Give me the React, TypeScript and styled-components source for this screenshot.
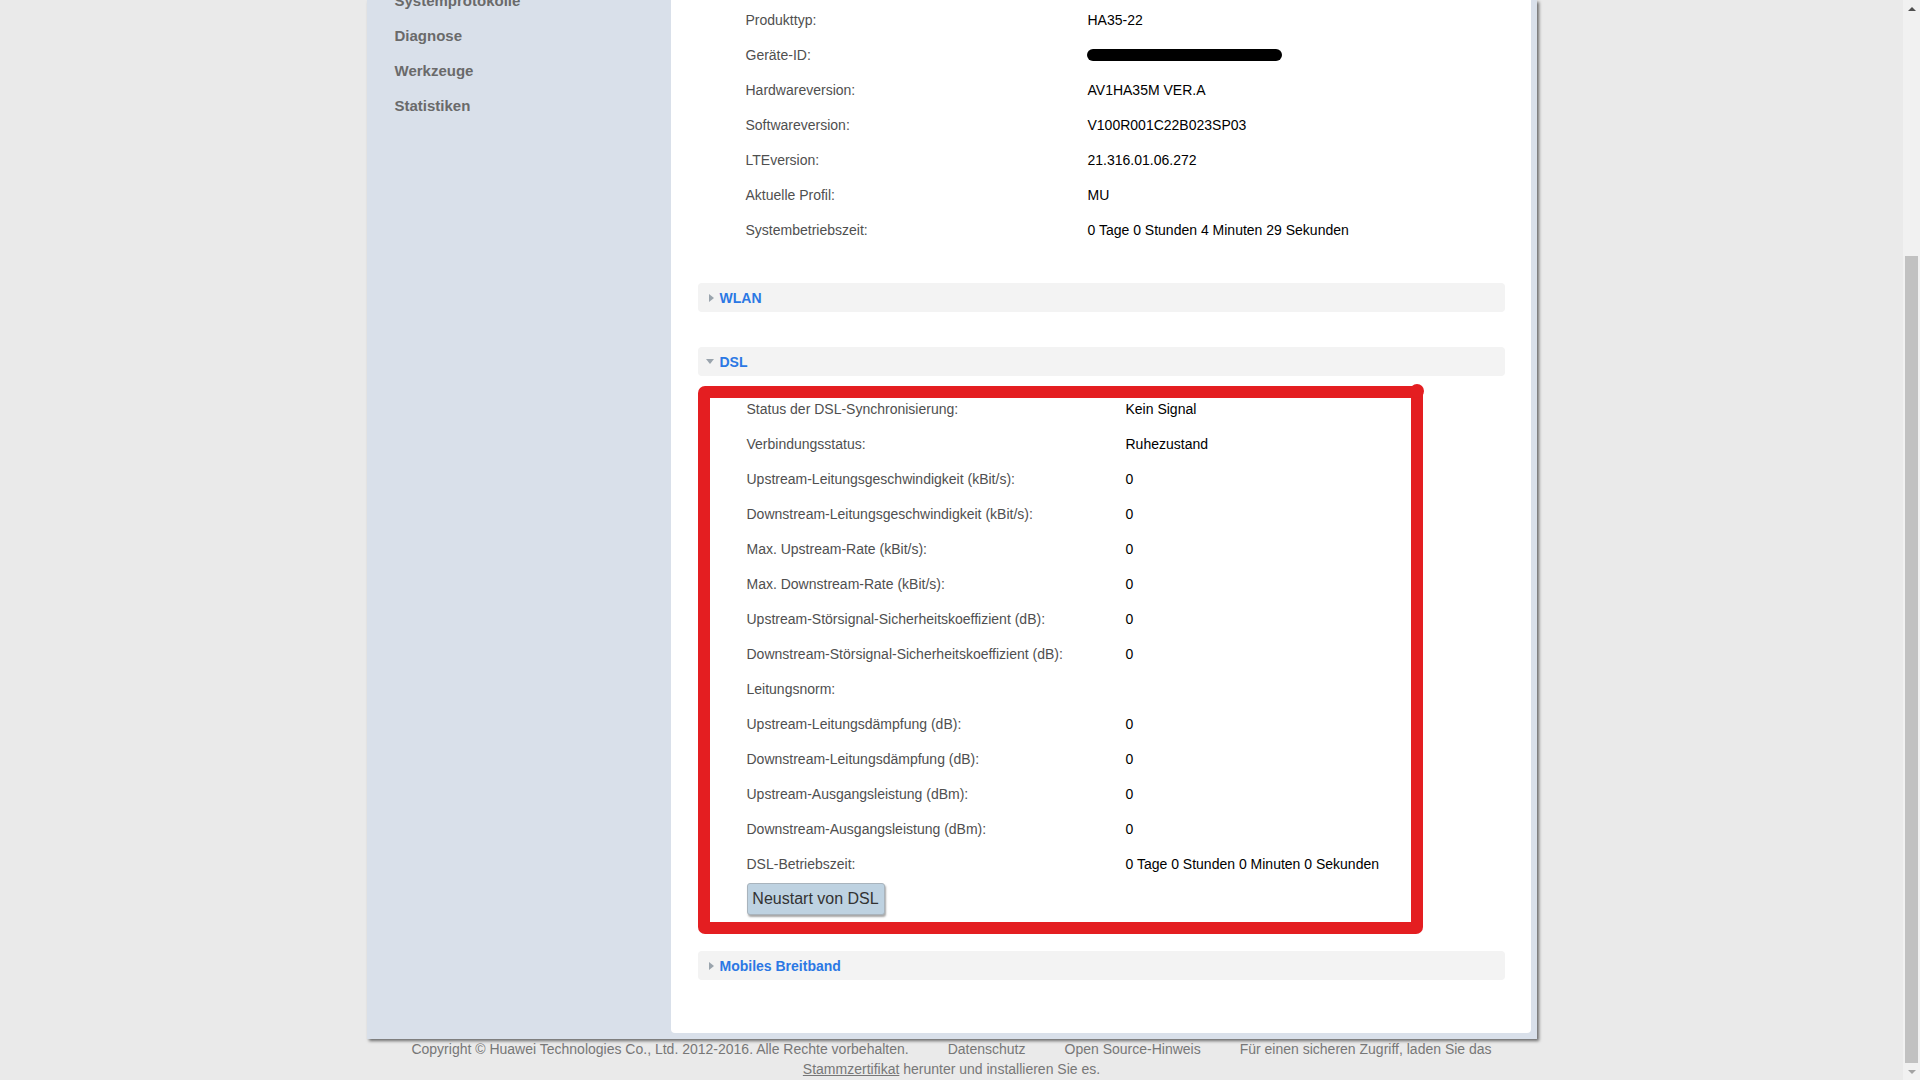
import React, { FC } from "react";
import styled, { createGlobalStyle } from "styled-components";

const GlobalStyle = createGlobalStyle`
  html, body {
    margin: 0;
    padding: 0;
    background-color: #eaeaea;
    font-family: "Liberation Sans", Arial, sans-serif;
    overflow: hidden;
  }
`;

const Screen = styled.div`
  display: flex;
  width: 1920px;
  height: 1080px;
  overflow: hidden;
`;

const Viewport = styled.div`
  flex: 1;
  display: flex;
  flex-direction: column;
  align-items: center;
`;

const Panel = styled.div`
  display: flex;
  width: 1170px;
  background-color: #d9e0ea;
  padding: 0 6px 6px 0;
  box-sizing: border-box;
  box-shadow: 2px 2px 3px rgba(0, 0, 0, 0.55);
`;

const Sidebar = styled.ul`
  width: 304px;
  flex-shrink: 0;
  list-style: none;
  margin: -17px 0 0 0;
  padding: 0 0 0 28px;
  box-sizing: border-box;
`;

const MenuItem = styled.li`
  height: 35px;
  line-height: 35px;
  font-size: 15px;
  font-weight: bold;
  color: #6a6a6a;
`;

const Content = styled.div`
  flex: 1;
  background-color: #fff;
  border-radius: 0 0 4px 4px;
  padding: 2px 26px 53px 27px;
`;

const Table = styled.div<{ indent: number }>`
  display: flex;
  flex-direction: column;
  padding-left: ${props => props.indent}px;
`;

const Row = styled.div<{ labelWidth: number }>`
  display: grid;
  grid-template-columns: ${props => props.labelWidth}px 1fr;
  height: 35px;
  align-items: center;
  font-size: 14px;
`;

const Label = styled.span`
  color: #4f4f4f;
`;

const Value = styled.span`
  color: #000;
`;

const Redacted = styled.span`
  display: block;
  width: 195px;
  height: 12px;
  border-radius: 6px;
  background-color: #000;
  margin-left: -1px;
`;

const SectionBar = styled.div<{ gap: number }>`
  display: flex;
  align-items: center;
  gap: 6px;
  height: 29px;
  margin-top: ${props => props.gap}px;
  padding-left: 8px;
  background-color: #f3f3f3;
  border-radius: 4px;
  font-size: 14px;
  font-weight: bold;
  color: #2b78e4;
`;

const Arrow = styled.span<{ open?: boolean }>`
  width: 0;
  height: 0;
  margin-left: ${props => (props.open ? "0" : "3px")};
  border-style: solid;
  border-color: transparent;
  ${props =>
    props.open
      ? "border-width: 5px 4px 0 4px; border-top-color: #9aa4ad;"
      : "border-width: 4px 0 4px 5px; border-left-color: #9aa4ad;"}
`;

const MarkedBox = styled.div`
  position: relative;
  width: 725px;
  margin-top: 10px;
  padding: 5px 0 19px 0;
  box-sizing: border-box;
  border-radius: 7px;
  box-shadow: inset 0 0 0 12px #e41e21;

  &::after {
    content: "";
    position: absolute;
    top: -2px;
    right: -1px;
    width: 14px;
    height: 14px;
    border-radius: 50%;
    background-color: #e41e21;
  }
`;

const RestartButton = styled.button`
  display: block;
  width: 138px;
  height: 32px;
  margin: 2px 0 0 49px;
  padding: 0;
  font-family: "Liberation Sans", Arial, sans-serif;
  font-size: 16px;
  color: #333;
  background-color: #bed2e1;
  border: 1px solid #a9b4bd;
  border-radius: 3px;
  box-shadow: 1px 2px 2px rgba(0, 0, 0, 0.35);
`;

const Footer = styled.div`
  width: 1170px;
  text-align: center;
  font-size: 14px;
  line-height: 20px;
  color: #777;
`;

const FooterItem = styled.span`
  & + & {
    margin-left: 39px;
  }
`;

const FooterLink = styled.span`
  text-decoration: underline;
`;

const Scrollbar = styled.div`
  width: 17px;
  display: flex;
  flex-direction: column;
  background-color: #f1f1f1;
`;

const ScrollArrow = styled.div<{ up?: boolean }>`
  height: 17px;
  display: flex;
  align-items: center;
  justify-content: center;

  &::before {
    content: "";
    border-style: solid;
    border-color: transparent;
    ${props =>
      props.up
        ? "border-width: 0 4px 4px 4px; border-bottom-color: #505050;"
        : "border-width: 4px 4px 0 4px; border-top-color: #a3a3a3;"}
  }
`;

const ScrollSpace = styled.div<{ size: number }>`
  height: ${props => props.size}px;
`;

const Thumb = styled.div`
  flex: 1;
  margin: 0 2px;
  background-color: #c1c1c1;
`;

const menu = ["Systemprotokolle", "Diagnose", "Werkzeuge", "Statistiken"];

const deviceInfo: [string, string][] = [
  ["Produkttyp:", "HA35-22"],
  ["Geräte-ID:", ""],
  ["Hardwareversion:", "AV1HA35M VER.A"],
  ["Softwareversion:", "V100R001C22B023SP03"],
  ["LTEversion:", "21.316.01.06.272"],
  ["Aktuelle Profil:", "MU"],
  ["Systembetriebszeit:", "0 Tage 0 Stunden 4 Minuten 29 Sekunden"],
];

const dslInfo: [string, string][] = [
  ["Status der DSL-Synchronisierung:", "Kein Signal"],
  ["Verbindungsstatus:", "Ruhezustand"],
  ["Upstream-Leitungsgeschwindigkeit (kBit/s):", "0"],
  ["Downstream-Leitungsgeschwindigkeit (kBit/s):", "0"],
  ["Max. Upstream-Rate (kBit/s):", "0"],
  ["Max. Downstream-Rate (kBit/s):", "0"],
  ["Upstream-Störsignal-Sicherheitskoeffizient (dB):", "0"],
  ["Downstream-Störsignal-Sicherheitskoeffizient (dB):", "0"],
  ["Leitungsnorm:", ""],
  ["Upstream-Leitungsdämpfung (dB):", "0"],
  ["Downstream-Leitungsdämpfung (dB):", "0"],
  ["Upstream-Ausgangsleistung (dBm):", "0"],
  ["Downstream-Ausgangsleistung (dBm):", "0"],
  ["DSL-Betriebszeit:", "0 Tage 0 Stunden 0 Minuten 0 Sekunden"],
];

const App: FC = () => {
  return (
    <>
      <GlobalStyle />
      <Screen>
        <Viewport>
          <Panel>
            <Sidebar>
              {menu.map(item => (
                <MenuItem key={item}>{item}</MenuItem>
              ))}
            </Sidebar>

            <Content>
              <Table indent={48}>
                {deviceInfo.map(([label, value]) => (
                  <Row labelWidth={342} key={label}>
                    <Label>{label}</Label>
                    {label === "Geräte-ID:" ? <Redacted /> : <Value>{value}</Value>}
                  </Row>
                ))}
              </Table>

              <SectionBar gap={36}>
                <Arrow />
                WLAN
              </SectionBar>

              <SectionBar gap={35}>
                <Arrow open />
                DSL
              </SectionBar>

              <MarkedBox>
                <Table indent={49}>
                  {dslInfo.map(([label, value]) => (
                    <Row labelWidth={379} key={label}>
                      <Label>{label}</Label>
                      <Value>{value}</Value>
                    </Row>
                  ))}
                </Table>
                <RestartButton>Neustart von DSL</RestartButton>
              </MarkedBox>

              <SectionBar gap={17}>
                <Arrow />
                Mobiles Breitband
              </SectionBar>
            </Content>
          </Panel>

          <Footer>
            <FooterItem>Copyright © Huawei Technologies Co., Ltd. 2012-2016. Alle Rechte vorbehalten.</FooterItem>
            <FooterItem>Datenschutz</FooterItem>
            <FooterItem>Open Source-Hinweis</FooterItem>
            <FooterItem>
              Für einen sicheren Zugriff, laden Sie das <FooterLink>Stammzertifikat</FooterLink> herunter und installieren Sie es.
            </FooterItem>
          </Footer>
        </Viewport>

        <Scrollbar>
          <ScrollArrow up />
          <ScrollSpace size={239} />
          <Thumb />
          <ScrollArrow />
        </Scrollbar>
      </Screen>
    </>
  );
};

export default App;
